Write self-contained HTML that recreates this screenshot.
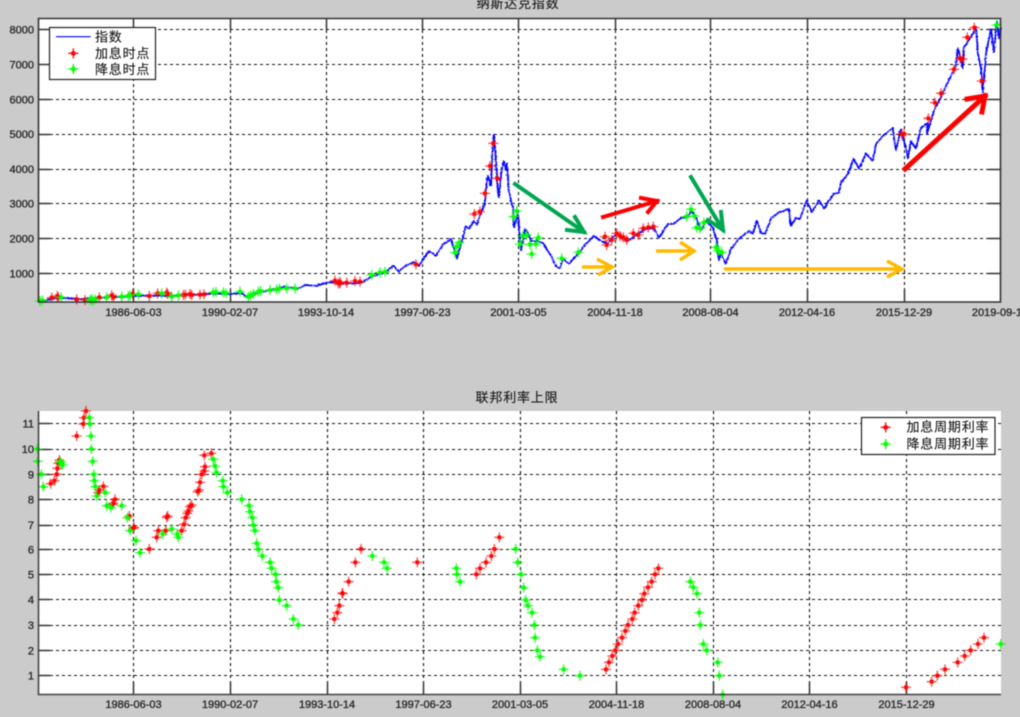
<!DOCTYPE html>
<html lang="zh"><head><meta charset="utf-8"><title>纳斯达克指数</title>
<style>
html,body{margin:0;padding:0;width:1020px;height:717px;overflow:hidden;background:#cbcbcb}
svg{display:block;position:absolute;left:0;top:0;filter:blur(.4px)}
text{font-family:"Liberation Sans",Arial,sans-serif;font-size:11px;fill:#2a2a2a;stroke:#2a2a2a;stroke-width:.35}
.cn{font-family:"Liberation Sans","WenQuanYi Zen Hei","Noto Sans CJK SC",sans-serif;font-size:13px;fill:#111;stroke:#111;stroke-width:.1;letter-spacing:.8px}
.g{stroke:#111;stroke-width:1.1;stroke-dasharray:3 3;fill:none}
.t{stroke:#333;stroke-width:1.5;fill:none}
.r,.n{fill:none;stroke:none}
.r{marker:url(#mr)}
.n{marker:url(#mg)}
</style></head>
<body>
<svg width="1020" height="717" viewBox="0 0 1020 717" xmlns="http://www.w3.org/2000/svg">
<defs>
<marker id="mr" markerUnits="userSpaceOnUse" markerWidth="40" markerHeight="40" refX="20" refY="20" overflow="visible"><g transform="translate(20,20)" fill="none" stroke="#f00"><path d="M-15 0H15M0-15V15" stroke-width="4" opacity=".7"/><path d="M-5-5L5 5M-5 5L5-5" stroke-width="5"/></g></marker>
<marker id="mg" markerUnits="userSpaceOnUse" markerWidth="40" markerHeight="40" refX="20" refY="20" overflow="visible"><g transform="translate(20,20)" fill="none" stroke="#0f0"><path d="M-15 0H15M0-15V15" stroke-width="4" opacity=".8"/><path d="M-5-5L5 5M-5 5L5-5" stroke-width="5"/></g></marker>
<filter id="nz" x="-2%" y="-5%" width="104%" height="110%" color-interpolation-filters="sRGB"><feTurbulence type="turbulence" baseFrequency=".55" numOctaves="1" seed="4" result="t"/><feDisplacementMap in="SourceGraphic" in2="t" scale="2.5" xChannelSelector="R" yChannelSelector="G"/></filter>
</defs>
<rect x="38" y="18.5" width="962" height="283.5" fill="#fff"/>
<rect x="38" y="411" width="963" height="283.5" fill="#fff"/>

<path class="g" d="M50 29.5H988M50 64.5H988M50 99.5H988M50 134.5H988M50 169.5H988M50 203.5H988M50 238.5H988M50 273.5H988"/>
<path class="g" d="M133.5 30V290M230.5 30V290M326.5 30V290M422.5 30V290M518.5 30V290M615.5 30V290M710.5 30V290M807.5 30V290M904.5 30V290"/>
<path class="t" d="M38 29.5H50M38 64.5H50M38 99.5H50M38 134.5H50M38 169.5H50M38 203.5H50M38 238.5H50M38 273.5H50M1000 29.5H988M1000 64.5H988M1000 99.5H988M1000 134.5H988M1000 169.5H988M1000 203.5H988M1000 238.5H988M1000 273.5H988M133.5 302V290M230.5 302V290M326.5 302V290M422.5 302V290M518.5 302V290M615.5 302V290M710.5 302V290M807.5 302V290M904.5 302V290M133.5 18.5V30M230.5 18.5V30M326.5 18.5V30M422.5 18.5V30M518.5 18.5V30M615.5 18.5V30M710.5 18.5V30M807.5 18.5V30M904.5 18.5V30"/>

<path class="g" d="M50 423.5H1001M50 449.5H1001M50 474.5H1001M50 499.5H1001M50 525.5H1001M50 549.5H1001M50 574.5H1001M50 599.5H1001M50 625.5H1001M50 650.5H1001M50 675.5H1001"/>
<path class="g" d="M133.5 411V682M230.5 411V682M327.5 411V682M423.5 411V682M520.5 411V682M616.5 411V682M713.5 411V682M809.5 411V682M906.5 411V682"/>
<path class="t" d="M38 423.5H50M38 449.5H50M38 474.5H50M38 499.5H50M38 525.5H50M38 549.5H50M38 574.5H50M38 599.5H50M38 625.5H50M38 650.5H50M38 675.5H50M133.5 694V682M230.5 694V682M327.5 694V682M423.5 694V682M520.5 694V682M616.5 694V682M713.5 694V682M809.5 694V682M906.5 694V682"/>

<polyline fill="none" stroke="#00f" stroke-width="1.7" stroke-linejoin="bevel" filter="url(#nz)" points="38,301 50,298 60,297 80,298 100,297 120,296 133,295 150,295 170,295 190,294 210,293 233,293 240,292 248,297 254,293 260,291 272,289 283,286 297,288 305,284 315,285 325,282 335,281 340,283 360,282 372,275 383,272 393,265 398,271 403,266 413,261 418,265 428,250 435,255 438,250 442,244 450,238 453,247 456,258 458,250 461,240 465,225 468,228 473,220 476,224 480,212 484,203 486,180 487,175 490,185 491,163 493,133 495,160 497,190 498,197 500,175 501,168 503,160 505,170 506,162 508,190 510,200 512,207 513,227 515,220 517,213 518,225 520,250 522,240 524,228 527,232 530,240 537,240 543,243 547,250 550,255 555,265 559,268 562,258 568,263 577,253 585,243 593,235 600,240 607,243 612,236 617,233 627,240 637,233 645,228 653,227 658,237 667,223 673,223 680,217 687,216 691,210 695,216 700,230 705,220 712,227 716,240 718,260 720,253 725,263 730,248 738,238 748,230 752,233 756,220 760,232 764,233 770,218 777,212 783,210 788,208 790,225 795,217 799,218 806,199 811,212 818,199 823,208 828,200 833,193 838,192 840,182 847,173 853,158 858,168 865,153 872,160 875,143 882,135 892,127 895,150 900,128 905,147 907,158 910,140 915,148 920,127 927,122 926,133 933,110 942,92 950,75 955,65 957,47 962,68 963,47 972,33 975,25 977,53 980,67 982,92 985,53 990,28 993,52 996,20 998,38 1000,27"/>

<path d="M515 184L584 232M575 217L584 232L567 230" fill="none" stroke="#00a651" stroke-width="4" stroke-linecap="square"/>
<path d="M691 177L723 230M721 212L723 230L708 220" fill="none" stroke="#00a651" stroke-width="4" stroke-linecap="square"/>
<path d="M603 217L657 201M641 198L657 201L648 212" fill="none" stroke="#f00" stroke-width="4" stroke-linecap="square"/>
<path d="M905 169L985 96M967 99L985 96L982 112" fill="none" stroke="#f00" stroke-width="5" stroke-linecap="square"/>
<path d="M582 267L612 267M597 259L612 267L598 275" fill="none" stroke="#ffb900" stroke-width="3.5"/>
<path d="M656 251L694 251M680 242L694 251L680 260" fill="none" stroke="#ffb900" stroke-width="3.5"/>
<path d="M724 269L902 269M887 261L902 269L887 277" fill="none" stroke="#ffb900" stroke-width="3.5"/>

<g transform="translate(0,0) scale(.33333)">
<polyline class="r" points="155,893 172,888 175,892 230,898 255,900 298,892 340,892 335,886 398,882 448,888 473,880 500,878 503,882 550,885 556,884 570,882 575,885 600,884 612,883 1005,842 1015,850 1020,846"/>
<polyline class="n" points="120,903 127,901 183,892 270,900 275,897 285,898 278,903 320,892 365,890 390,886 385,888 415,883 485,880 515,890 535,886 640,877 648,876 670,877 678,880 720,875 745,890 752,886 760,882 775,875 782,873 810,870 830,868 838,866 860,865 885,865"/>
</g>
<g transform="translate(340,100) scale(.33333)">
<polyline class="r" points="0,550 20,548 45,543 60,545 228,493 403,342 420,335 435,280 450,198 472,235 460,130 795,410 800,435 815,420 830,400 840,408 850,412 860,420 880,400 895,405 910,385 925,382 940,380"/>
<polyline class="n" points="95,525 120,517 135,515 345,458 350,440 358,428 520,350 530,333 540,432 548,408 560,405 570,433 588,432 595,413 575,462 665,475 715,457"/>
</g>
<g transform="translate(680,0) scale(.33333)">
<polyline class="n" points="20,650 33,628 43,648 50,683 60,685 72,668 108,742 115,752 125,758 950,75"/>
<polyline class="r" points="665,402 672,402 745,355 765,308 783,280 822,208 840,175 848,177 862,112 883,83 905,243"/>
</g>
<g transform="translate(0,385) scale(.33333)">
<polyline class="r" points="152,296 163,287 170,268 172,250 175,235 178,225 230,153 250,117 252,98 258,78 295,323 298,315 310,304 337,358 340,355 345,343 388,393 400,430 402,427 448,492 470,457 475,437 497,437 500,397 503,393 545,437 552,418 557,398 562,385 565,378 570,365 575,360 593,320 597,315 600,292 605,268 613,258 615,245 613,211 634,205 1003,702 1012,683 1018,662 1027,625"/>
<polyline class="n" points="112,192 113,229 124,268 130,305 180,230 182,232 188,240 268,98 270,117 273,153 274,192 278,229 281,268 283,287 286,305 290,333 316,323 320,362 333,368 365,362 382,398 390,437 408,467 420,503 488,447 515,432 532,447 535,457 640,223 645,243 650,263 668,287 670,305 682,323 725,343 747,362 750,380 757,398 760,420 765,437 770,475 775,493 787,513 810,532 815,550 827,568 829,590 835,608 838,645 860,662 880,702 895,720"/>
</g>
<g transform="translate(340,385) scale(.33333)">
<polyline class="r" points="8,625 26,590 46,532 63,492 232,532 409,568 420,550 438,532 454,513 463,492 478,457 798,853 807,832 817,813 826,796 834,777 846,758 856,738 864,720 877,702 884,683 895,662 906,645 913,626 924,607 935,590 945,568 955,550"/>
<polyline class="n" points="97,513 132,532 141,550 349,550 351,568 360,590 527,492 533,532 543,568 551,608 557,645 564,662 576,683 583,720 585,758 592,796 600,815 671,853 720,872"/>
</g>
<g transform="translate(680,385) scale(.33333)">
<polyline class="n" points="31,590 40,607 51,626 58,683 61,720 70,777 80,796 113,832 118,872 128,929 962,777"/>
<polyline class="r" points="678,907 755,890 772,872 795,853 833,832 854,813 872,796 894,777 912,758"/>
</g>

<path d="M38.5 18.5H1000.5V302H38.5Z" fill="none" stroke="#333" stroke-width="1.6"/>
<path d="M38.5 411V694.5H1001" fill="none" stroke="#444" stroke-width="1.6"/>

<rect x="49.5" y="27.5" width="106" height="52" fill="#fff" stroke="#222" stroke-width="1.2"/>
<line x1="56" y1="36.7" x2="90.7" y2="36.7" stroke="#00f" stroke-width="1.2"/>
<g transform="scale(.33333)"><polyline class="r" points="220,160 220,160"/><polyline class="n" points="220,207 220,207"/></g>
<text class="cn" x="95" y="41.5">指数</text>
<text class="cn" x="95" y="58">加息时点</text>
<text class="cn" x="95" y="74">降息时点</text>

<rect x="861.5" y="417.5" width="133.5" height="37" fill="#fff" stroke="#222" stroke-width="1.2"/>
<g transform="translate(680,385) scale(.33333)"><polyline class="r" points="617,127 617,127"/><polyline class="n" points="617,177 617,177"/></g>
<text class="cn" x="906.5" y="431.5">加息周期利率</text>
<text class="cn" x="906.5" y="448.5">降息周期利率</text>

<text class="cn" x="518" y="8" text-anchor="middle">纳斯达克指数</text>
<text class="cn" x="517" y="402" text-anchor="middle">联邦利率上限</text>

<g text-anchor="end">
<text x="34" y="33.5">8000</text><text x="34" y="68.5">7000</text><text x="34" y="103.3">6000</text><text x="34" y="138">5000</text><text x="34" y="173">4000</text><text x="34" y="207.7">3000</text><text x="34" y="242.5">2000</text><text x="34" y="277.5">1000</text>
<text x="34" y="427.7">11</text><text x="34" y="453">10</text><text x="34" y="478.3">9</text><text x="34" y="503.5">8</text><text x="34" y="529">7</text><text x="34" y="553.5">6</text><text x="34" y="578.5">5</text><text x="34" y="603.7">4</text><text x="34" y="629">3</text><text x="34" y="654.3">2</text><text x="34" y="679.7">1</text>
</g>
<g text-anchor="middle">
<text x="133.5" y="316">1986-06-03</text><text x="230" y="316">1990-02-07</text><text x="326" y="316">1993-10-14</text><text x="422.5" y="316">1997-06-23</text><text x="518.5" y="316">2001-03-05</text><text x="615" y="316">2004-11-18</text><text x="710.5" y="316">2008-08-04</text><text x="807" y="316">2012-04-16</text><text x="904" y="316">2015-12-29</text><text x="1000" y="316">2019-09-10</text>
<text x="133.5" y="708">1986-06-03</text><text x="230" y="708">1990-02-07</text><text x="327" y="708">1993-10-14</text><text x="423.5" y="708">1997-06-23</text><text x="520" y="708">2001-03-05</text><text x="616.5" y="708">2004-11-18</text><text x="713" y="708">2008-08-04</text><text x="809.5" y="708">2012-04-16</text><text x="906.5" y="708">2015-12-29</text>
</g>
</svg>
</body></html>
